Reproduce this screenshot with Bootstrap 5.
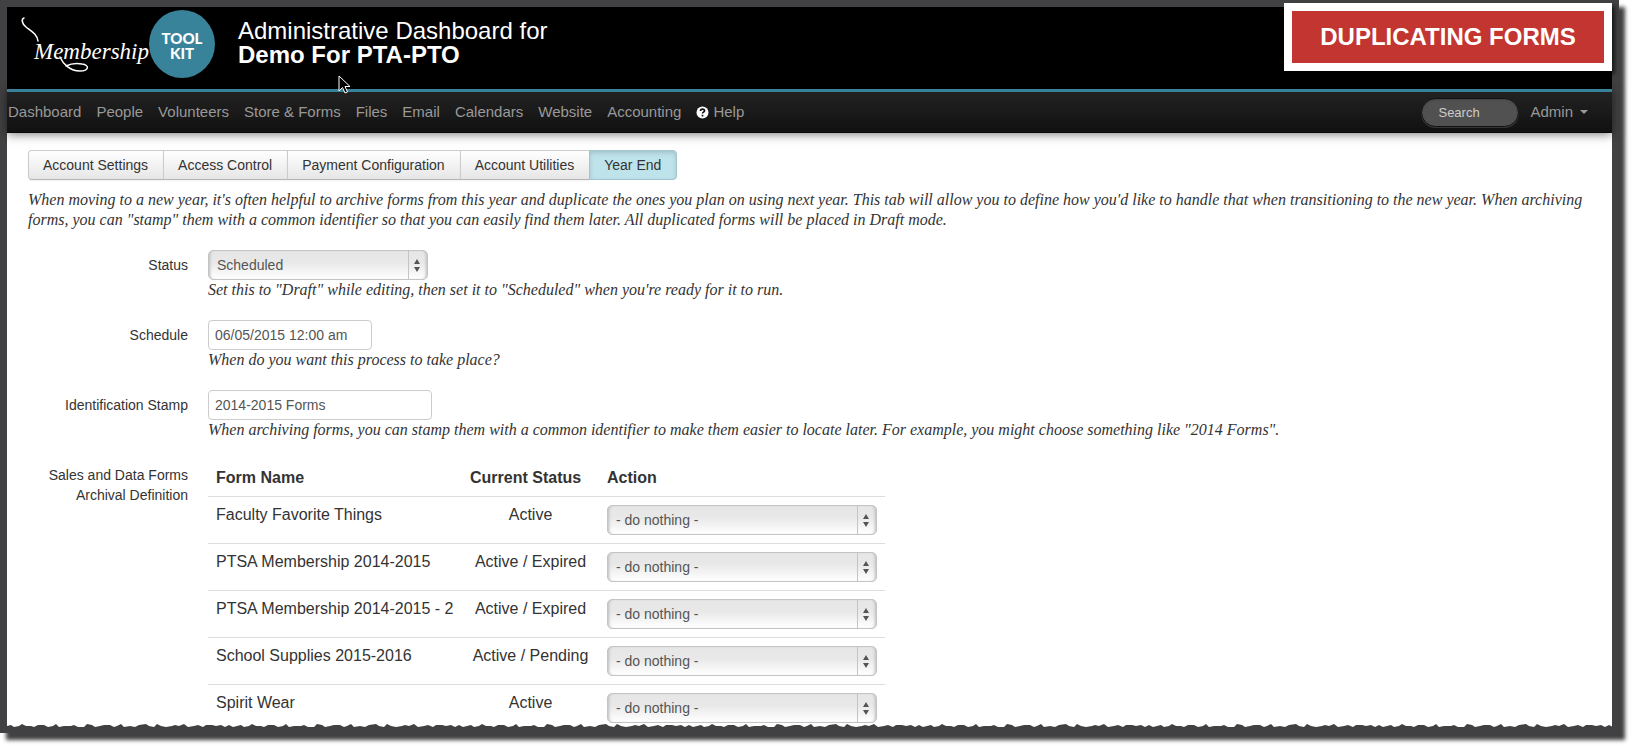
<!DOCTYPE html>
<html lang="en">
<head>
<meta charset="utf-8">
<meta name="viewport" content="width=device-width, initial-scale=1">
<title>Administrative Dashboard - Year End</title>
<link href="https://cdn.jsdelivr.net/npm/bootstrap@5.3.0/dist/css/bootstrap.min.css" rel="stylesheet">
<style>
  :root { --frame: #414042; --teal: #388399; }
  body { font-family: "Liberation Sans", Arial, sans-serif; font-size: 14px; line-height: 20px; color: #333; background: #fff; }
  .page-frame { margin: 0 12px 15px 0; border: 7px solid var(--frame); border-bottom: 0; box-shadow: 6px 7px 4px var(--frame); background: #fff; }

  .masthead { background: #000; height: 82px; }
  .site-logo { width: 210px; height: 74px; display: block; }
  .masthead h1 { font-size: 24px; line-height: 24px; color: #fff; padding-top: 12px; margin-left: 21px; }
  .callout-banner { position: absolute; top: -4px; right: 0; border: 8px solid #fff; background: #c23531; color: #fff; font-size: 24px; line-height: 52px; width: 328px; box-shadow: 3px 3px 4px rgba(0,0,0,.6); }
  .pointer { position: absolute; left: 331px; top: 68px; z-index: 2; }

  .main-nav { border-top: 3px solid var(--teal); background: linear-gradient(#222, #111); border-bottom: 1px solid #080808; min-height: 44px; font-size: 15px; box-shadow: 0 1px 10px rgba(0,0,0,.55); position: relative; }
  .main-nav .nav-link { color: #999; padding: 0; }
  .main-nav .nav-list { gap: 15px; padding-left: 1px; }
  .nav-right { margin-right: 24px; gap: 11px; }
  .nav-search { width: 98px; height: 29px; border: 1px solid #111; background: #515151; border-radius: 15px; color: #ccc; font-size: 13px; padding: 0 16px; box-shadow: inset 0 1px 2px rgba(0,0,0,.2), 0 1px 0 rgba(255,255,255,.15); outline: 0; }
  .nav-search::placeholder { color: #ccc; opacity: 1; }
  .caret-down { border: 4px solid transparent; border-top-color: #999; border-bottom: 0; margin-left: 7px; }

  .content-area { padding: 17px 20px 0 21px; }
  .tab-buttons .btn { font-size: 14px; line-height: 20px; padding: 4px 15px 4px 14px; color: #333; border: 1px solid #ccc; border-bottom-color: #b3b3b3; background: linear-gradient(#fff, #e6e6e6); box-shadow: 0 1px 2px rgba(0,0,0,.05); border-radius: 4px; }
  .tab-buttons .btn.active { background: #bfe3eb; border-color: #a3c5cd; box-shadow: inset 0 2px 4px rgba(0,0,0,.15); }
  .note { font-family: "Liberation Serif", "Times New Roman", serif; font-style: italic; font-size: 16px; line-height: 20px; margin: 0; }
  .intro { margin: 10px 0 20px; }

  .field-row { margin-bottom: 20px; }
  .field-label { width: 160px; margin-right: 20px; padding-top: 5px; text-align: right; flex: none; }
  .text-field { display: block; height: 30px; border: 1px solid #ccc; border-radius: 4px; padding: 0 6px; color: #555; font-size: 14px; }
  .pick { display: block; height: 30px; border: 1px solid #c4c4c4; border-radius: 5px; padding: 0 24px 0 8px; color: #555; font-size: 14px; appearance: none;
    background: url("data:image/svg+xml,%3Csvg xmlns='http://www.w3.org/2000/svg' width='19' height='28'%3E%3Cpath d='M.5 0v28' stroke='%23c4c4c4'/%3E%3Cpath d='M6 13l3-5 3 5zM6 16h6l-3 5z' fill='%23555'/%3E%3C/svg%3E") no-repeat right center, linear-gradient(#e6e6e6, #e8e8e8 40%, #fff); box-shadow: inset 3px 0 3px -2px #bbb, inset -3px 0 3px -2px #bbb; }
  .w-status { width: 220px; } .w-date { width: 164px; } .w-stamp { width: 224px; } .w-action { width: 270px; }

  .forms-table { font-size: 16px; color: #333; }
  .forms-table th, .forms-table td { padding: 8px; vertical-align: top; line-height: 20px; }
  .forms-table td { border-top: 1px solid #ddd; }
  .forms-table .c-name { width: 254px; } .forms-table .c-status { width: 137px; text-align: center; } .forms-table th.c-status { text-align: left; }
  .torn-edge { display: block; width: 100%; height: 10px; margin-top: -8px; position: relative; }
</style>
</head>
<body>
<div class="page-frame">
  <header class="masthead d-flex position-relative">
    <svg class="site-logo flex-shrink-0" viewBox="0 0 210 74" role="img" aria-label="Membership Toolkit">
      <g fill="none" stroke="#fff" stroke-width="1.500" stroke-linecap="round">
        <path d="M17 11c-3 1-2 6 2 9 5 4 11 7 12 14"/>
        <path d="M53 50c3 7 10 14 20 14 9 0 10-6 2-7-6-1-12 0-16 2"/>
      </g>
      <text x="27" y="52" fill="#fff" font-family="Liberation Serif, serif" font-style="italic" font-size="23">Membership</text>
      <ellipse cx="175" cy="37" rx="33" ry="34" fill="#388399"/>
      <text x="175" y="37" fill="#fff" text-anchor="middle" font-family="Lato, sans-serif" font-weight="900" font-size="15">TOOL</text>
      <text x="175" y="52" fill="#fff" text-anchor="middle" font-family="Lato, sans-serif" font-weight="900" font-size="15">KIT</text>
    </svg>
    <h1 class="fw-normal mb-0">Administrative Dashboard for<br><strong>Demo For PTA-PTO</strong></h1>
    <div class="callout-banner text-center fw-bold">DUPLICATING FORMS</div>
    <svg class="pointer" width="13" height="20" viewBox="0 0 13 20" aria-hidden="true"><path d="M1 1v15l3.500-3.500 2.500 5.500 2.500-1-2.500-5.500h5z" fill="#000" stroke="#fff"/></svg>
  </header>

  <nav class="main-nav d-flex align-items-center justify-content-between">
    <ul class="nav nav-list align-items-center">
      <li><a class="nav-link" href="#">Dashboard</a></li>
      <li><a class="nav-link" href="#">People</a></li>
      <li><a class="nav-link" href="#">Volunteers</a></li>
      <li><a class="nav-link" href="#">Store &amp; Forms</a></li>
      <li><a class="nav-link" href="#">Files</a></li>
      <li><a class="nav-link" href="#">Email</a></li>
      <li><a class="nav-link" href="#">Calendars</a></li>
      <li><a class="nav-link" href="#">Website</a></li>
      <li><a class="nav-link" href="#">Accounting</a></li>
      <li><a class="nav-link d-flex align-items-center" href="#"><svg class="me-1" width="13" height="13" viewBox="0 0 13 13" aria-hidden="true"><circle cx="6.500" cy="6.500" r="6" fill="#fff"/><path d="M4.500 5c0-2.500 4-2.500 4-.3 0 1.500-2 1.300-2 2.800M6.500 8.800v1.700" fill="none" stroke="#111" stroke-width="1.700"/></svg>Help</a></li>
    </ul>
    <div class="nav-right d-flex align-items-center">
      <input class="nav-search" type="text" placeholder="Search" aria-label="Search">
      <a class="nav-link d-flex align-items-center" href="#">Admin<span class="caret-down"></span></a>
    </div>
  </nav>

  <main class="content-area">
    <div class="btn-group tab-buttons">
      <button type="button" class="btn">Account Settings</button>
      <button type="button" class="btn">Access Control</button>
      <button type="button" class="btn">Payment Configuration</button>
      <button type="button" class="btn">Account Utilities</button>
      <button type="button" class="btn active">Year End</button>
    </div>
    <p class="note intro">When moving to a new year, it's often helpful to archive forms from this year and duplicate the ones you plan on using next year. This tab will allow you to define how you'd like to handle that when transitioning to the new year. When archiving forms, you can "stamp" them with a common identifier so that you can easily find them later. All duplicated forms will be placed in Draft mode.</p>

    <form>
      <div class="field-row d-flex">
        <label class="field-label" for="status">Status</label>
        <div><select class="pick w-status" id="status"><option>Scheduled</option><option>Draft</option></select>
          <p class="note">Set this to "Draft" while editing, then set it to "Scheduled" when you're ready for it to run.</p></div>
      </div>
      <div class="field-row d-flex">
        <label class="field-label" for="schedule">Schedule</label>
        <div><input class="text-field w-date" id="schedule" type="text" value="06/05/2015 12:00 am">
          <p class="note">When do you want this process to take place?</p></div>
      </div>
      <div class="field-row d-flex">
        <label class="field-label" for="stamp">Identification Stamp</label>
        <div><input class="text-field w-stamp" id="stamp" type="text" value="2014-2015 Forms">
          <p class="note">When archiving forms, you can stamp them with a common identifier to make them easier to locate later. For example, you might choose something like "2014 Forms".</p></div>
      </div>
      <div class="d-flex">
        <div class="field-label" id="forms-label">Sales and Data Forms Archival Definition</div>
        <table class="forms-table" aria-labelledby="forms-label">
          <thead><tr><th class="c-name">Form Name</th><th class="c-status">Current Status</th><th>Action</th></tr></thead>
          <tbody>
            <tr><td>Faculty Favorite Things</td><td class="c-status">Active</td><td><select class="pick w-action" aria-label="Action for Faculty Favorite Things"><option>- do nothing -</option></select></td></tr>
            <tr><td>PTSA Membership 2014-2015</td><td class="c-status">Active / Expired</td><td><select class="pick w-action" aria-label="Action for PTSA Membership 2014-2015"><option>- do nothing -</option></select></td></tr>
            <tr><td>PTSA Membership 2014-2015 - 2</td><td class="c-status">Active / Expired</td><td><select class="pick w-action" aria-label="Action for PTSA Membership 2014-2015 - 2"><option>- do nothing -</option></select></td></tr>
            <tr><td>School Supplies 2015-2016</td><td class="c-status">Active / Pending</td><td><select class="pick w-action" aria-label="Action for School Supplies 2015-2016"><option>- do nothing -</option></select></td></tr>
            <tr><td>Spirit Wear</td><td class="c-status">Active</td><td><select class="pick w-action" aria-label="Action for Spirit Wear"><option>- do nothing -</option></select></td></tr>
          </tbody>
        </table>
      </div>
    </form>
  </main>
  <svg class="torn-edge" aria-hidden="true">
    <defs><pattern id="torn" width="230" height="10" patternUnits="userSpaceOnUse">
      <path fill="#414042" d="M0 10V3L4 2 7 4 12 3 15 1 19 3 24 3 27 4 31 2 37 2 41 4 46 3 49 1 52 4 57 3 64 3 67 2 71 4 77 4 80 1 85 2 88 4 93 3 97 2 103 2 107 4 110 3 114 1 117 4 123 3 128 4 132 2 139 1 142 3 147 4 150 1 154 3 159 4 165 3 168 2 172 3 177 1 181 4 187 3 191 2 196 4 199 2 205 2 209 3 214 2 218 4 222 2 226 4 230 3V10z"/>
    </pattern></defs>
    <rect width="100%" height="10" fill="url(#torn)"/>
  </svg>
</div>
<script src="https://cdn.jsdelivr.net/npm/bootstrap@5.3.0/dist/js/bootstrap.bundle.min.js"></script>
</body>
</html>
